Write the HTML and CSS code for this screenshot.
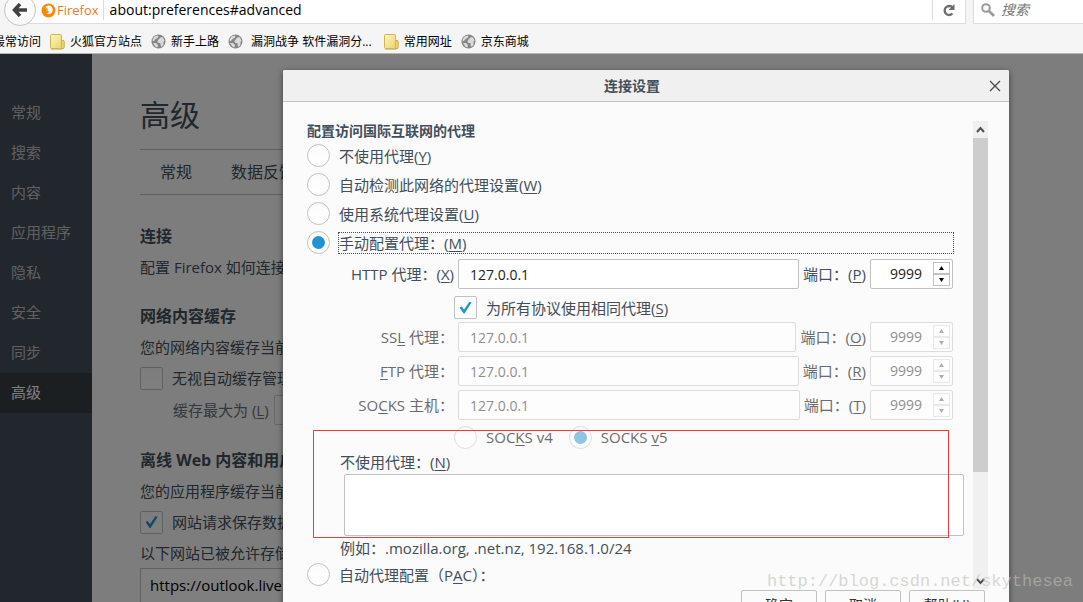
FILE: index.html
```html
<!DOCTYPE html>
<html lang="zh-CN">
<head>
<meta charset="utf-8">
<title>连接设置</title>
<link rel="stylesheet" href="styles.css">
</head>
<body>
<svg class="defs" aria-hidden="true">
  <defs>
    <linearGradient id="paper" x1="0" y1="0" x2="1" y2="1"><stop offset="0" stop-color="#fdf6bd"/><stop offset="1" stop-color="#ecd36c"/></linearGradient>
    <symbol id="folder" viewBox="0 0 15 16">
      <path d="M11 6.500h2q1.200 0 1.200 1.200v5.500q0 1.300-1.200 1.300h-2z" fill="#eed877" stroke="#c9ab3c"/>
      <rect x=".5" y=".5" width="11" height="14" rx="1" fill="url(#paper)" stroke="#d0b552"/>
      <path d="M1 15.500h11" stroke="#b9a04a" opacity=".5"/>
    </symbol>
    <symbol id="globe" viewBox="0 0 15 15">
      <circle cx="7.500" cy="7.500" r="7" fill="#858585"/>
      <path d="M1.500 5.500l2-3 3-1 1 1-1 1.500-2 1-1 1.500-1.500 1zM7 6l3-3 2 .5 1.500 3-1 1.500 0 3-2 2-1-2 0-2-2 0-1-1zM2 9l3 0 2 2-.5 2.500-2-.8z" fill="#dadada"/>
    </symbol>
  </defs>
</svg>
<div class="browser">
  <header class="toolbar">
    <div class="nav-row">
      <button class="back" aria-label="后退"><svg width="16" height="14" viewBox="0 0 16 14"><path d="M8 1L2.500 7 8 13M3 7h12" fill="none" stroke="#424242" stroke-width="3.500"/></svg></button>
      <div class="urlbar">
        <svg width="15" height="15" viewBox="0 0 15 15"><circle cx="7.500" cy="7.500" r="7" fill="#f58a0b"/><path d="M5 3.500Q8 1.500 11 4q1.500 3 0 5.500Q8.500 12 5.500 10.500 7 10 8 9 6 8 6.500 6L4 5z" fill="#fff"/><path d="M1 3q1 1 3 .5L7 6 5 7q0 2 3 2" fill="#f9a11b"/></svg>
        <span class="brand">Firefox</span>
        <input class="url" aria-label="地址" value="about:preferences#advanced">
        <button class="reload" aria-label="重新加载"><svg width="14" height="14" viewBox="0 0 14 14"><path d="M10.500 4.500A4.500 4.500 0 1 0 10.500 10.500" fill="none" stroke="#6d6d6d" stroke-width="2.300"/><path d="M12.500 1v6h-6z" fill="#6d6d6d"/></svg></button>
      </div>
      <label class="search">
        <svg width="14" height="14" viewBox="0 0 14 14"><circle cx="5" cy="5" r="3.800" fill="none" stroke="#999" stroke-width="2"/><path d="M8 8l5 5" stroke="#999" stroke-width="2.600"/></svg>
        <input placeholder="搜索" aria-label="搜索">
      </label>
    </div>
    <nav class="bookmarks">
      <a href="#">最常访问</a>
      <a href="#"><svg width="15" height="16"><use href="#folder"/></svg>火狐官方站点</a>
      <a href="#"><svg width="15" height="15"><use href="#globe"/></svg>新手上路</a>
      <a href="#"><svg width="15" height="15"><use href="#globe"/></svg><span class="spaced">漏洞战争 软件漏洞分...</span></a>
      <a href="#"><svg width="15" height="16"><use href="#folder"/></svg>常用网址</a>
      <a href="#"><svg width="15" height="15"><use href="#globe"/></svg>京东商城</a>
    </nav>
  </header>

  <div class="page">
    <nav class="sidebar">
      <a href="#">常规</a><a href="#">搜索</a><a href="#">内容</a><a href="#">应用程序</a><a href="#">隐私</a><a href="#">安全</a><a href="#">同步</a><a href="#" class="selected">高级</a>
    </nav>
    <main class="main">
      <h1>高级</h1>
      <div class="tabs"><button>常规</button><button>数据反馈</button></div>
      <h2>连接</h2>
      <p>配置 Firefox 如何连接</p>
      <h2>网络内容缓存</h2>
      <p>您的网络内容缓存当前</p>
      <label class="check-row"><input type="checkbox" class="check"><span>无视自动缓存管理</span></label>
      <div class="size-row"><label for="size">缓存最大为 (<u>L</u>)</label><input id="size" class="size"></div>
      <h2>离线 Web 内容和用户</h2>
      <p>您的应用程序缓存当前</p>
      <label class="check-row"><input type="checkbox" class="check" checked><span>网站请求保存数据</span></label>
      <p>以下网站已被允许存储</p>
      <div class="sites">https://outlook.live.com</div>
    </main>

    <div class="overlay">
      <section class="dialog" role="dialog" aria-labelledby="dialog-title">
        <div class="titlebar">
          <h3 id="dialog-title">连接设置</h3>
          <button class="close" aria-label="关闭"><svg width="12" height="12" viewBox="0 0 12 12"><path d="M1 1l10 10M11 1L1 11" stroke="#4a4a4a" stroke-width="1.300"/></svg></button>
        </div>
        <div class="dialog-body">
          <form class="form">
            <h4>配置访问国际互联网的代理</h4>
            <label class="radio-row"><input type="radio" name="mode" class="radio"><span>不使用代理(<u>Y</u>)</span></label>
            <label class="radio-row"><input type="radio" name="mode" class="radio"><span>自动检测此网络的代理设置(<u>W</u>)</span></label>
            <label class="radio-row"><input type="radio" name="mode" class="radio"><span>使用系统代理设置(<u>U</u>)</span></label>
            <label class="radio-row"><input type="radio" name="mode" class="radio" checked><span class="focused">手动配置代理<i>：</i>(<u>M</u>)</span></label>

            <div class="servers">
              <div class="proxy">
                <label class="name" for="http">HTTP 代理<i>：</i>(<u>X</u>)</label>
                <input class="host" id="http" value="127.0.0.1">
                <label for="http-port">端口<i>：</i>(<u>P</u>)</label>
                <div class="port"><input type="number" id="http-port" value="9999"><div class="spin"><button type="button" aria-label="增加"><svg width="5" height="4"><path d="M0 4h5L2.500 0z"/></svg></button><button type="button" aria-label="减少"><svg width="5" height="4"><path d="M0 0h5L2.500 4z"/></svg></button></div></div>
              </div>
              <label class="share"><input type="checkbox" class="check" checked><span>为所有协议使用相同代理(<u>S</u>)</span></label>
              <div class="proxy off">
                <label class="name" for="ssl">SS<u>L</u> 代理<i>：</i></label>
                <input class="host" id="ssl" value="127.0.0.1" disabled>
                <label for="ssl-port">端口<i>：</i>(<u>O</u>)</label>
                <div class="port"><input type="number" id="ssl-port" value="9999" disabled><div class="spin"><button type="button" aria-label="增加" disabled><svg width="5" height="4"><path d="M0 4h5L2.500 0z"/></svg></button><button type="button" aria-label="减少" disabled><svg width="5" height="4"><path d="M0 0h5L2.500 4z"/></svg></button></div></div>
              </div>
              <div class="proxy off">
                <label class="name" for="ftp"><u>F</u>TP 代理<i>：</i></label>
                <input class="host" id="ftp" value="127.0.0.1" disabled>
                <label for="ftp-port">端口<i>：</i>(<u>R</u>)</label>
                <div class="port"><input type="number" id="ftp-port" value="9999" disabled><div class="spin"><button type="button" aria-label="增加" disabled><svg width="5" height="4"><path d="M0 4h5L2.500 0z"/></svg></button><button type="button" aria-label="减少" disabled><svg width="5" height="4"><path d="M0 0h5L2.500 4z"/></svg></button></div></div>
              </div>
              <div class="proxy off">
                <label class="name" for="socks">SO<u>C</u>KS 主机<i>：</i></label>
                <input class="host" id="socks" value="127.0.0.1" disabled>
                <label for="socks-port">端口<i>：</i>(<u>T</u>)</label>
                <div class="port"><input type="number" id="socks-port" value="9999" disabled><div class="spin"><button type="button" aria-label="增加" disabled><svg width="5" height="4"><path d="M0 4h5L2.500 0z"/></svg></button><button type="button" aria-label="减少" disabled><svg width="5" height="4"><path d="M0 0h5L2.500 4z"/></svg></button></div></div>
              </div>
              <div class="versions off">
                <label><input type="radio" name="ver" class="radio" disabled><span>SOC<u>K</u>S v4</span></label>
                <label><input type="radio" name="ver" class="radio" checked disabled><span>SOCKS <u>v</u>5</span></label>
              </div>
            </div>
            <label class="line" for="bypass">不使用代理<i>：</i>(<u>N</u>)</label>
            <textarea id="bypass" class="bypass"></textarea>
            <div class="line">例如<i>：</i>.mozilla.org, .net.nz, 192.168.1.0/24</div>
            <label class="radio-row"><input type="radio" name="mode" class="radio"><span>自动代理配置<i>（</i>P<u>A</u>C<i>）</i><i>：</i></span></label>
          </form>
          <div class="scrollbar">
            <svg width="15" height="17" viewBox="0 0 15 17"><path d="M4 11l3.500-4 3.500 4" fill="none" stroke="#505050" stroke-width="2"/></svg>
            <div class="thumb"></div>
            <svg width="15" height="17" viewBox="0 0 15 17"><path d="M4 7l3.500 4 3.500-4" fill="none" stroke="#505050" stroke-width="2"/></svg>
          </div>
        </div>
        <div class="actions"><button>确定</button><button>取消</button><button>帮助(<u>H</u>)</button></div>
      </section>
      <div class="marker"></div>
      <div class="watermark">http://blog.csdn.net/skythesea</div>
    </div>
  </div>
</div>
</body>
</html>
```
FILE: styles.css
```css
* { box-sizing: border-box; }
body {
  margin: 0;
  font-family: "Open Sans", "Noto Sans CJK SC", sans-serif;
  font-size: 14px;
  line-height: 20px;
  color: #424e5a;
}
button, input, textarea { font: inherit; color: inherit; margin: 0; padding: 0; border: 0; background: none; outline: 0; }
svg { display: block; flex: none; }
a { color: inherit; text-decoration: none; }
i { font-style: normal; font-family: "Noto Sans CJK TC", sans-serif; line-height: 1; }
u { text-underline-offset: 2px; }
h1, h2, h3, h4, p { margin: 0; }
.defs { position: absolute; width: 0; height: 0; }
.browser { display: flex; flex-direction: column; height: 100vh; overflow: hidden; }

.toolbar { flex: none; background: #f5f5f5; border-bottom: 1px solid #b5b5b5; color: #000; }
.nav-row { display: flex; height: 24px; align-items: flex-start; }
.back {
  width: 32px; height: 32px; margin: -6px 0 0 4px; flex: none;
  display: grid; place-items: center;
  border: 1px solid #c4c4c4; border-radius: 50%; background: #fbfbfb;
  z-index: 1;
}
.urlbar {
  flex: 1; display: flex; align-items: center; height: 24px;
  margin-left: -16px; padding: 0 0 3px 20px;
  background: #fff; border: 1px solid #dcdcdc; border-top: 0;
}
.brand { color: #e77c1e; font-size: 13px; padding: 0 4px 0 1px; border-right: 1px solid #dcdcdc; }
.url { flex: 1; min-width: 0; padding-left: 6px; height: 20px; }
.reload { width: 33px; height: 20px; display: grid; place-items: center; border-left: 1px solid #dcdcdc; }
.search {
  width: 110px; margin-left: 7px; height: 24px; display: flex; align-items: center; gap: 6px;
  padding: 0 0 3px 7px; background: #fff; border: 1px solid #dcdcdc; border-width: 0 0 1px 1px;
}
.search input { width: 70px; font-style: italic; }
.search input::placeholder { color: #777; opacity: 1; }
.bookmarks { display: flex; align-items: center; gap: 9px; height: 29px; padding-top: 6px; margin-left: -7px; font-size: 12px; }
.bookmarks a { display: flex; align-items: center; gap: 5px; white-space: nowrap; }
.spaced { padding: 0 3px; }

.page { flex: 1; min-height: 0; position: relative; display: flex; background: #fbfbfb; }
.sidebar { width: 92px; flex: none; padding-top: 39px; background: #444c5a; color: #c1c1c1; font-size: 15px; line-height: 38px; }
.sidebar a { display: block; padding: 0 0 2px 11px; }
.sidebar .selected { background: #383f43; color: #fff; }
.main { flex: 1; min-width: 0; padding: 37px 96px 0 48px; overflow: hidden; font-size: 15px; white-space: nowrap; }
.main h1 { font-size: 30px; line-height: 48px; font-weight: 400; }
.tabs { display: flex; gap: 39px; height: 46px; margin: 10px 0 29px; padding-left: 20px; border: 1px solid #c1c1c1; border-width: 1px 0; font-size: 16px; }
.main h2 { font-size: 16px; line-height: 24px; margin: 22px 0 4px; }
.tabs + h2 { margin-top: 0; }
.main p { line-height: 30px; }
.check-row { display: flex; align-items: center; gap: 9px; height: 32px; }
.size-row { display: flex; align-items: center; gap: 5px; height: 32px; padding-left: 33px; opacity: .8; }
.size { width: 100px; height: 30px; border: 1px solid #c1c1c1; border-radius: 2px; }
.sites { height: 160px; padding: 6px 9px; border: 1px solid #c1c1c1; background: #fff; color: #000; }

.check, .radio {
  appearance: none; flex: none; width: 23px; height: 23px;
  border: 1px solid #c1c1c1; border-radius: 2px;
  background: linear-gradient(#fbfbfb, #fff);
  display: grid; place-items: center;
}
.radio { border-radius: 50%; }
.radio:checked::before { content: ""; width: 13px; height: 13px; border-radius: 50%; background: #2292d0; }
.check:checked::before {
  content: ""; width: 12px; height: 12px; background: #2292d0;
  clip-path: polygon(0 50%, 18% 42%, 38% 66%, 84% 0, 100% 8%, 42% 100%, 34% 100%);
}

.overlay { position: absolute; inset: 0; padding: 16px 74px 0 283px; background: rgba(0, 0, 0, .5); overflow: hidden; }
.dialog { background: #fbfbfb; border-radius: 2px; box-shadow: 0 2px 6px rgba(0, 0, 0, .5); }
.titlebar { display: flex; align-items: center; height: 32px; padding-right: 8px; background: #f0f0f0; border-bottom: 1px solid #c1c1c1; border-radius: 2px 2px 0 0; }
.titlebar h3 { flex: 1; padding-right: 8px; font-size: 14px; text-align: center; }
.close { width: 12px; height: 12px; }
.dialog-body { display: flex; height: 468px; margin: 19px 20px 0 24px; overflow: hidden; }
.form { flex: 1; min-width: 0; padding-right: 20px; font-size: 15px; white-space: nowrap; }
.form h4 { font-size: 14px; line-height: 20px; }
.radio-row { display: flex; align-items: center; gap: 9px; height: 29px; }
.focused { flex: 1; outline: 1px dotted #424e5a; }
.servers { padding-top: 2px; }
.proxy { display: flex; align-items: center; gap: 4px; height: 30px; margin-bottom: 4px; }
.name { width: 147px; flex: none; text-align: right; }
.host { flex: 1; min-width: 0; height: 30px; padding: 0 11px; border: 1px solid #c1c1c1; border-radius: 2px; background: #fff; color: #222; font-size: 14px; }
.port { width: 83px; height: 30px; display: flex; align-items: center; padding-right: 2px; border: 1px solid #c1c1c1; border-radius: 2px; background: #fff; color: #222; font-size: 14px; }
.port input { flex: 1; min-width: 0; text-align: right; padding-right: 11px; appearance: textfield; }
.port input::-webkit-inner-spin-button { appearance: none; margin: 0; }
.spin button { display: grid; place-items: center; width: 17px; height: 12px; border: 1px solid #c1c1c1; }
.share { display: flex; align-items: center; gap: 9px; height: 29px; padding-left: 147px; }
.off { color: #6c6c6c; }
.off .host, .off .port, .off .radio { opacity: .5; }
.off .port .spin { opacity: .6; }
.versions { display: flex; align-items: center; gap: 16px; padding-left: 147px; height: 26px; }
.versions label { display: flex; align-items: center; gap: 9px; }
.line { display: block; padding-left: 33px; height: 24px; line-height: 24px; }
.bypass { display: block; width: calc(100% - 26px); height: 62px; margin-left: 37px; border: 1px solid #c1c1c1; border-radius: 2px; background: #fff; resize: none; }
.scrollbar { width: 16px; flex: none; display: flex; flex-direction: column; background: #f0f0f0; border-right: 1px solid #fbfbfb; }
.thumb { height: 334px; background: #cdcdcd; margin-bottom: auto; }
.actions { display: flex; justify-content: flex-end; gap: 8px; padding: 1px 24px 20px; }
.actions button { width: 76px; height: 30px; border: 1px solid #c1c1c1; border-radius: 2px; color: #333; }
.marker { position: absolute; left: 313px; right: 134px; top: 376px; height: 108px; border: 1px solid #f23a38; }
.watermark { position: absolute; right: 10px; top: 518px; font: 17px/20px "Liberation Mono", monospace; color: rgba(190, 190, 180, .6); }
```
